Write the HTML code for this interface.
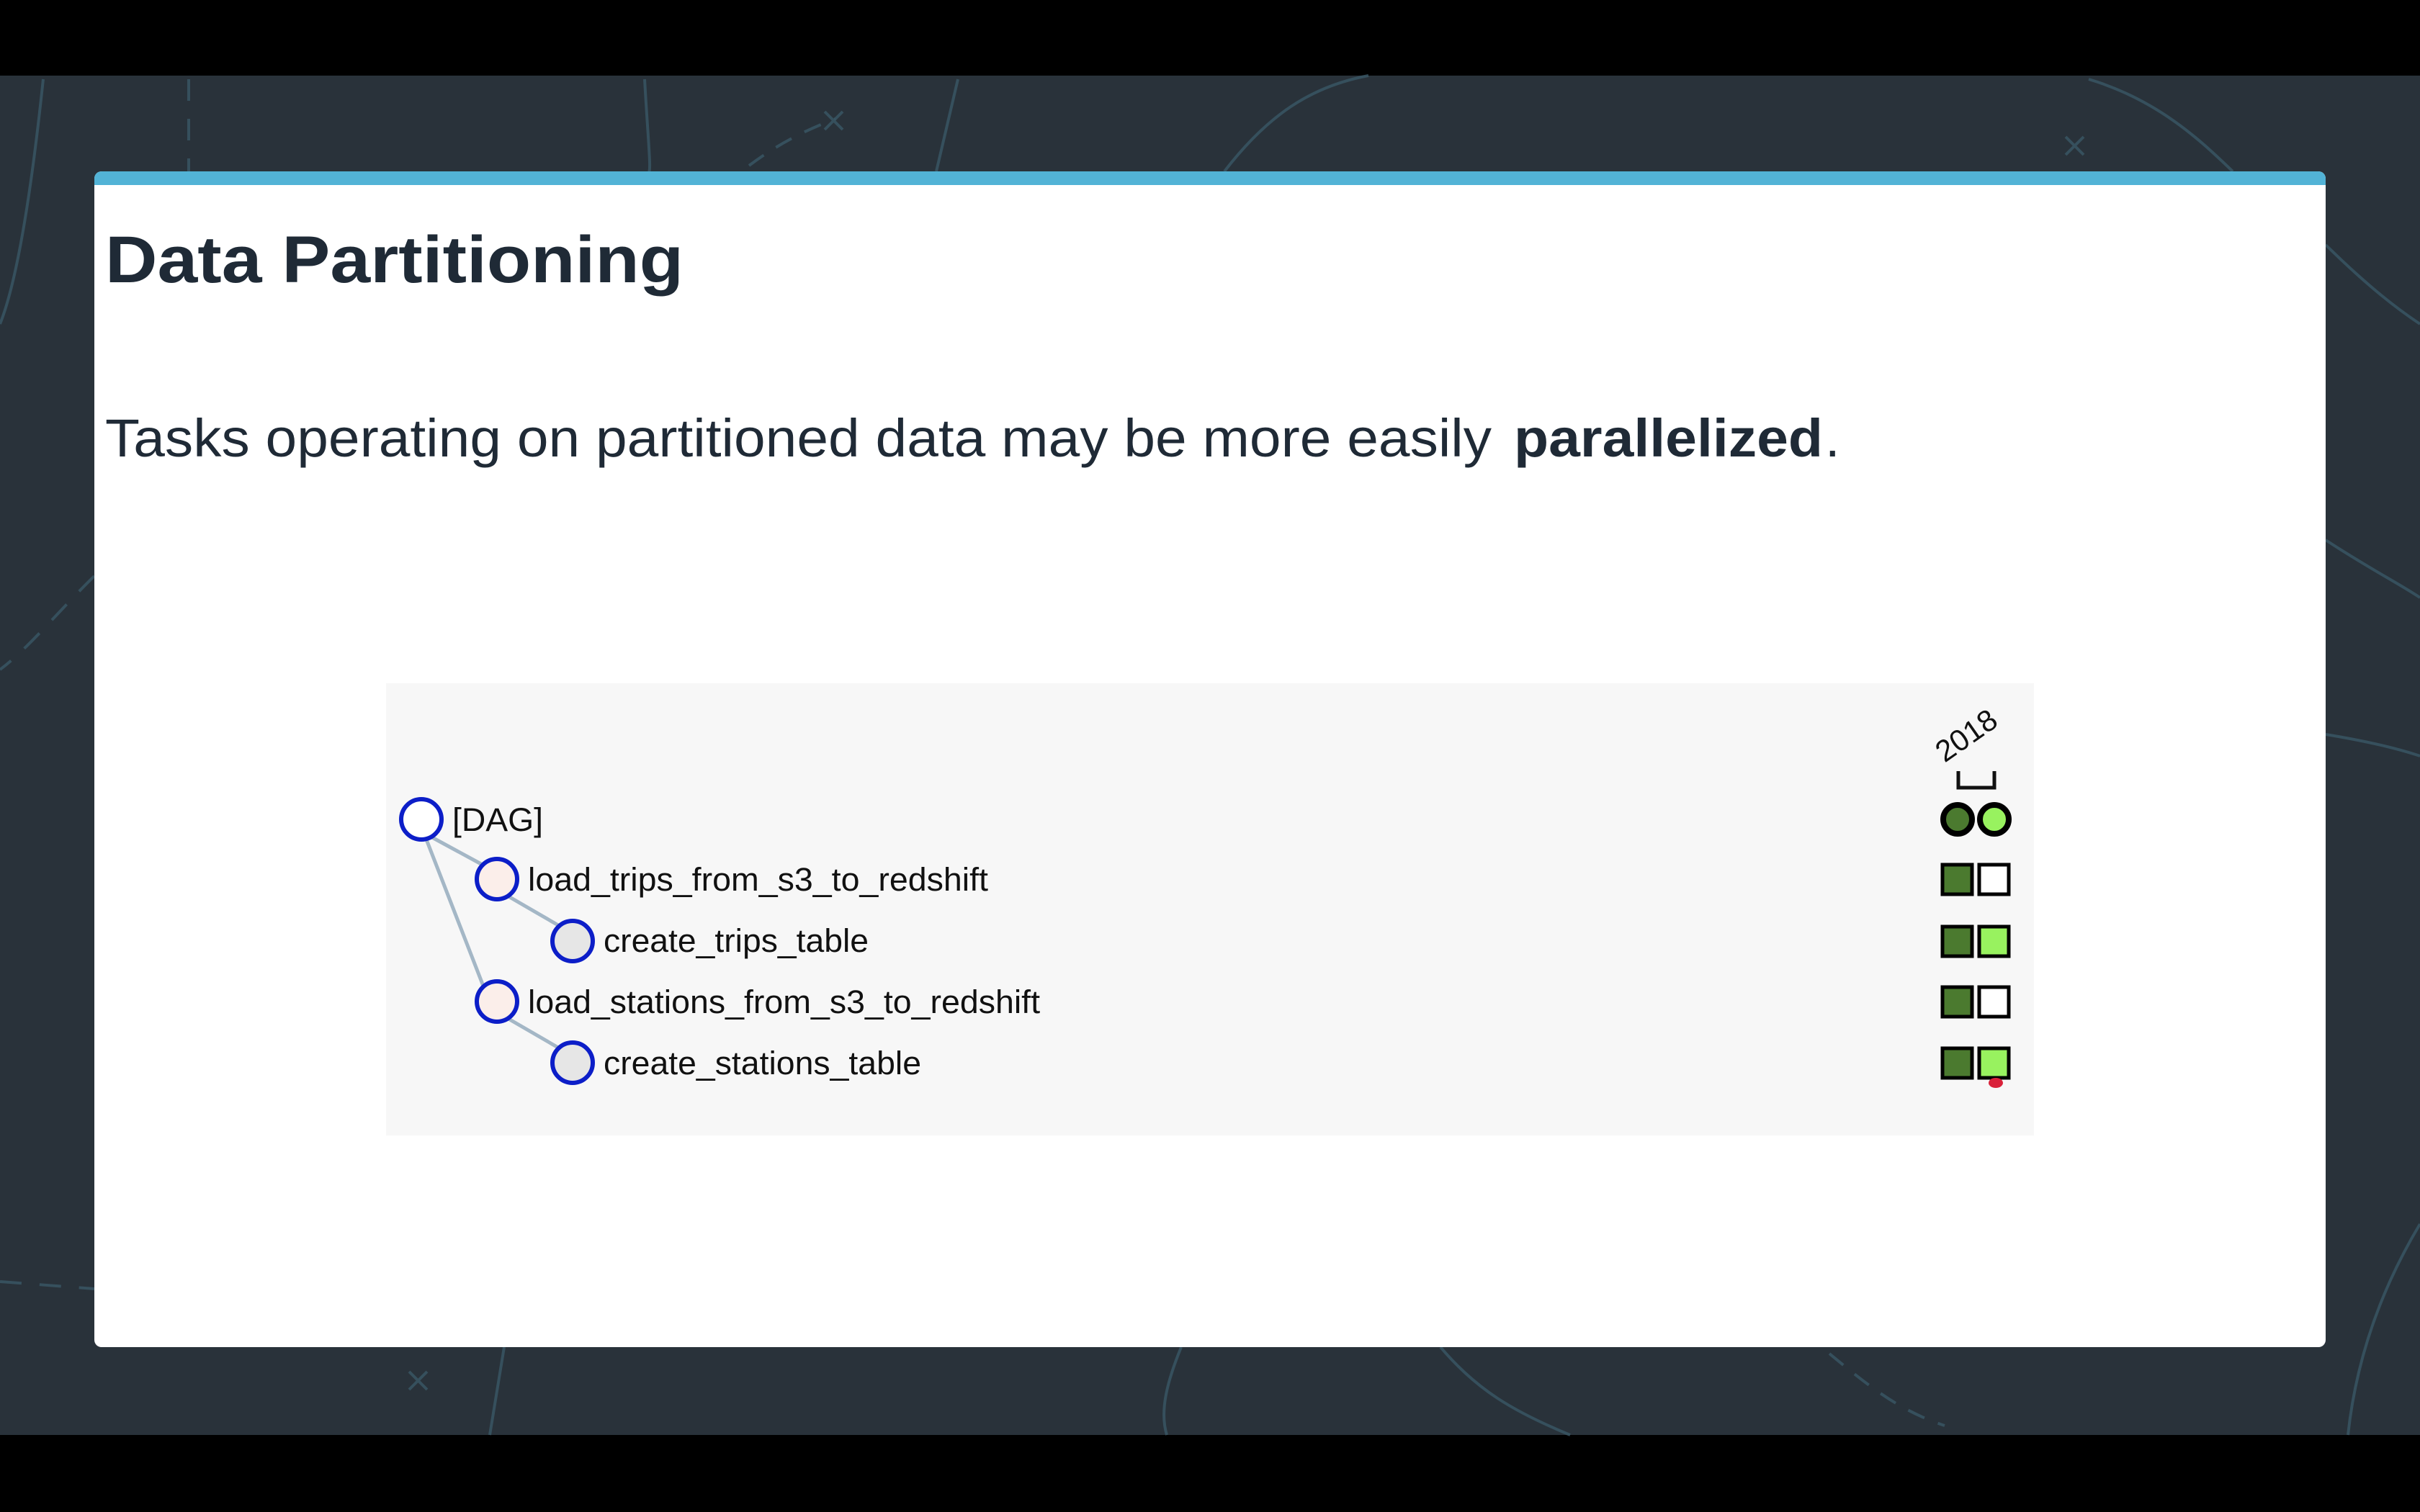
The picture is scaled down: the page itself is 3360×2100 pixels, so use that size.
<!DOCTYPE html>
<html><head><meta charset="utf-8"><style>
html,body{margin:0;padding:0;width:3360px;height:2100px;overflow:hidden;background:#000;}
</style></head><body>
<svg width="3360" height="2100" viewBox="0 0 3360 2100" xmlns="http://www.w3.org/2000/svg">
<rect x="0" y="105" width="3360" height="1888" fill="#29323a"/>
<g fill="none" stroke="#3a5866" stroke-width="4" opacity="0.8">
<path d="M60 110 C40 300 20 400 0 450"/>
<path d="M262 110 L262 300" stroke-dasharray="30 25"/>
<path d="M895 110 C900 200 905 240 900 240"/>
<path d="M1040 230 C1080 200 1120 180 1160 165" stroke-dasharray="25 20"/>
<path d="M1330 110 L1300 238"/>
<path d="M1700 238 C1760 160 1820 120 1900 105"/>
<path d="M2900 110 C3000 140 3060 200 3100 238"/>
<path d="M3229 340 C3290 400 3330 430 3360 450"/>
<path d="M3229 750 C3290 790 3330 810 3360 830"/>
<path d="M3229 1020 C3290 1030 3330 1040 3360 1050"/>
<path d="M3360 1700 C3300 1800 3270 1900 3260 1993"/>
<path d="M131 800 C80 850 40 900 0 930" stroke-dasharray="30 25"/>
<path d="M0 1780 L131 1790" stroke-dasharray="30 25"/>
<path d="M700 1871 L680 1993"/>
<path d="M1640 1871 C1620 1920 1610 1960 1620 1993"/>
<path d="M2000 1871 C2050 1930 2100 1960 2180 1993"/>
<path d="M2540 1880 C2600 1930 2640 1960 2700 1980" stroke-dasharray="25 20"/>
</g>
<g stroke="#3a5866" stroke-width="4" opacity="0.8">
<path d="M1145 155 L1170 180 M1170 155 L1145 180"/>
<path d="M2868 190 L2893 215 M2893 190 L2868 215"/>
<path d="M568 1905 L593 1930 M593 1905 L568 1930"/>
</g>
<rect x="131" y="238" width="3098" height="1633" rx="10" fill="#ffffff"/>
<path d="M141 238 H3219 a10 10 0 0 1 10 10 V257 H131 V248 a10 10 0 0 1 10 -10 Z" fill="#52b3d6"/>
<text x="146" y="392" font-family="Liberation Sans, sans-serif" font-weight="bold" font-size="92" fill="#1f2a36" textLength="803" lengthAdjust="spacingAndGlyphs">Data Partitioning</text>
<text x="146" y="634" font-family="Liberation Sans, sans-serif" font-size="74" fill="#1f2a36" textLength="1925" lengthAdjust="spacingAndGlyphs">Tasks operating on partitioned data may be more easily</text>
<text x="2102" y="634" font-family="Liberation Sans, sans-serif" font-weight="bold" font-size="74" fill="#1f2a36" textLength="429" lengthAdjust="spacingAndGlyphs">parallelized</text>
<text x="2534" y="634" font-family="Liberation Sans, sans-serif" font-size="74" fill="#1f2a36">.</text>
<rect x="536" y="949" width="2288" height="628" fill="#f7f7f7"/>
<g fill="none" stroke="#a4b7c6" stroke-width="5">
<path d="M598 1162 L668 1200"/>
<path d="M592 1166 L672 1372"/>
<path d="M706 1245 L775 1285"/>
<path d="M706 1415 L775 1455"/>
</g>
<g stroke="#0c1ec8" stroke-width="6">
<circle cx="585" cy="1138" r="28" fill="#ffffff"/>
<circle cx="690" cy="1221" r="28" fill="#fbeeea"/>
<circle cx="795" cy="1307" r="28" fill="#e6e6e6"/>
<circle cx="690" cy="1391" r="28" fill="#fbeeea"/>
<circle cx="795" cy="1476" r="28" fill="#e6e6e6"/>
</g>
<g font-family="Liberation Sans, sans-serif" font-size="45" fill="#111">
<text x="628" y="1154" textLength="126" lengthAdjust="spacingAndGlyphs">[DAG]</text>
<text x="733" y="1237" textLength="639" lengthAdjust="spacingAndGlyphs">load_trips_from_s3_to_redshift</text>
<text x="838" y="1322" textLength="368" lengthAdjust="spacingAndGlyphs">create_trips_table</text>
<text x="733" y="1407" textLength="711" lengthAdjust="spacingAndGlyphs">load_stations_from_s3_to_redshift</text>
<text x="838" y="1492" textLength="441" lengthAdjust="spacingAndGlyphs">create_stations_table</text>
</g>
<text x="0" y="0" font-family="Liberation Sans, sans-serif" font-size="42" fill="#111" transform="translate(2700 1060) rotate(-35)">2018</text>
<path d="M2719 1071 V1094 H2769 V1071" fill="none" stroke="#111" stroke-width="5"/>
<g stroke="#000" stroke-width="8">
<circle cx="2718" cy="1138" r="20" fill="#4b7a2f"/>
<circle cx="2769" cy="1138" r="20" fill="#98f25f"/>
</g>
<g stroke="#000" stroke-width="5">
<rect x="2697" y="1201" width="41" height="41" fill="#4b7a2f"/>
<rect x="2748" y="1201" width="41" height="41" fill="#ffffff"/>
<rect x="2697" y="1287" width="41" height="41" fill="#4b7a2f"/>
<rect x="2748" y="1287" width="41" height="41" fill="#98f25f"/>
<rect x="2697" y="1371" width="41" height="41" fill="#4b7a2f"/>
<rect x="2748" y="1371" width="41" height="41" fill="#ffffff"/>
<rect x="2697" y="1456" width="41" height="41" fill="#4b7a2f"/>
<rect x="2748" y="1456" width="41" height="41" fill="#98f25f"/>
</g>
<ellipse cx="2771" cy="1504" rx="10" ry="7" fill="#d9213a"/>
</svg>
</body></html>
